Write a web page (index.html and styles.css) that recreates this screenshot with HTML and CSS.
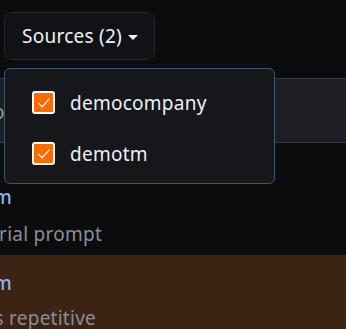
FILE: index.html
```html
<!DOCTYPE html>
<html>
<head>
<meta charset="utf-8">
<link rel="stylesheet" href="styles.css">
</head>
<body>
<div class="page">
  <div class="toolbar">
    <button class="sources-btn">Sources (2)<span class="caret"></span></button>
  </div>
  <div class="search-row"><span class="search-text">o</span></div>
  <div class="item">
    <div class="item-title title-1"><span>demotm</span></div>
    <div class="item-sub sub-1"><span>adversarial prompt</span></div>
  </div>
  <div class="item item-flagged">
    <div class="item-title title-2"><span>demotm</span></div>
    <div class="item-sub sub-2"><span>is repetitive</span></div>
  </div>

  <div class="menu">
    <label class="menu-row">
      <span class="check"><svg viewBox="0 0 24 24" width="18" height="18"><path d="M5 12.5l4.5 4.5L19 6.5" fill="none" stroke="#fff" stroke-width="1.6" stroke-linecap="round" stroke-linejoin="round"/></svg></span>
      <span class="menu-label">democompany</span>
    </label>
    <label class="menu-row">
      <span class="check"><svg viewBox="0 0 24 24" width="18" height="18"><path d="M5 12.5l4.5 4.5L19 6.5" fill="none" stroke="#fff" stroke-width="1.6" stroke-linecap="round" stroke-linejoin="round"/></svg></span>
      <span class="menu-label">demotm</span>
    </label>
  </div>
</div>
</body>
</html>
```
FILE: styles.css
```css
html, body {
  margin: 0;
  padding: 0;
  background: #0b0c0e;
  overflow: hidden;
}
body {
  width: 346px;
  height: 329px;
  font-family: "Noto Sans", "DejaVu Sans", sans-serif;
  letter-spacing: 0.25px;
}
.page {
  position: relative;
  width: 346px;
  height: 329px;
  overflow: hidden;
}
.toolbar {
  padding: 12px 4px 0 4px;
  height: 48px;
}
.sources-btn {
  display: flex;
  align-items: center;
  height: 48px;
  width: 151px;
  box-sizing: border-box;
  padding: 0 0 0 17px;
  background: #111215;
  border: 1px solid #26282c;
  border-radius: 9px;
  color: #f2f3f5;
  font-family: inherit;
  font-size: 19px;
  letter-spacing: 0.25px;
}
.caret {
  display: inline-block;
  margin-left: 6px;
  margin-top: 2px;
  width: 0;
  height: 0;
  border-left: 5px solid transparent;
  border-right: 5px solid transparent;
  border-top: 5px solid #f2f3f5;
}
.search-row {
  margin-top: 18px;
  height: 63px;
  background: #1d1f25;
  border-top: 1px solid #353b47;
  border-bottom: 1px solid #353b47;
  display: flex;
  align-items: center;
  color: #9aa0a8;
  font-size: 19px;
}
.search-text {
  margin-left: -7px;
  margin-top: 2px;
}
.item {
  padding: 41px 0 7px 0;
  font-size: 19px;
}
.item-title,
.item-sub {
  display: flex;
  justify-content: flex-end;
  white-space: nowrap;
}
.item-title {
  color: #8db3ea;
  line-height: 26px;
  height: 26px;
  font-weight: 500;
}
.item-sub {
  margin-top: 10px;
  color: #8b8e94;
  line-height: 28px;
  height: 28px;
}
.item-title span,
.item-sub span {
  flex: none;
}
.title-1,
.title-2 {
  width: 12px;
}
.sub-1 {
  width: 102px;
}
.sub-2 {
  width: 96px;
}
.item-flagged {
  background: #3d2314;
  padding-top: 15px;
  height: 74px;
  box-sizing: border-box;
}
.item-flagged .item-sub {
  margin-top: 8px;
}
.menu {
  position: absolute;
  left: 4px;
  top: 68px;
  width: 271px;
  height: 116px;
  box-sizing: border-box;
  background: #16171b;
  border: 1px solid #45546e;
  border-radius: 6px;
  padding: 8px 0 0 27px;
  display: flex;
  flex-direction: column;
}
.menu-row {
  display: flex;
  align-items: center;
  height: 51px;
  color: #eef0f3;
  font-size: 19px;
}
.check {
  width: 23px;
  height: 23px;
  box-sizing: border-box;
  background: #ff6a00;
  border: 2px solid #ffffff;
  border-radius: 3px;
  display: flex;
  align-items: center;
  justify-content: center;
  margin-right: 15px;
}
.check svg {
  display: block;
}
.menu-label {
  letter-spacing: 0.25px;
}
```
